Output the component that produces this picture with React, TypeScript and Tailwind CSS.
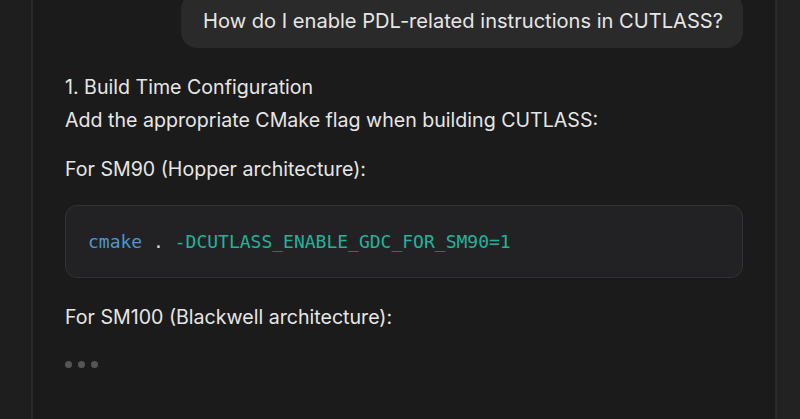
export default function App() {
  return (
    <div className="flex h-[419px] w-[800px] overflow-hidden bg-[#1b1b1b] font-['Inter',sans-serif] text-[#e6e6e6]">
      {/* left rail */}
      <div className="w-[33px] shrink-0 border-r-2 border-[#2a2a2a] bg-[#1e1e1e]" />

      {/* chat */}
      <div className="flex w-[742px] shrink-0 flex-col px-8">
        <div className="-mt-[7px] flex justify-end">
          <div className="rounded-2xl bg-[#2a2a2a] pb-[13px] pl-[22px] pr-[20px] pt-[14px] text-[20.1px] leading-[28px]">
            How do I enable PDL-related instructions in CUTLASS?
          </div>
        </div>

        <div className="mt-[23px] text-[19.6px] leading-[33px]">
          <p>1. Build Time Configuration</p>
          <p>Add the appropriate CMake flag when building CUTLASS:</p>
          <p className="mt-4">For SM90 (Hopper architecture):</p>
        </div>

        <div className="mt-[19px] flex h-[73px] items-center rounded-xl border border-[#333336] bg-[#222225] px-[22px] font-['DejaVu_Sans_Mono',monospace] text-[18px]">
          <span className="text-[#4f95cf]">cmake</span>
          <span className="text-[#d8d8d8]">&nbsp;.&nbsp;</span>
          <span className="text-[#22b39b]">-DCUTLASS_ENABLE_GDC_FOR_SM90=1</span>
        </div>

        <p className="mt-[23px] text-[19.6px] leading-[33px]">For SM100 (Blackwell architecture):</p>

        <div className="mt-[27px] flex gap-[6px]">
          <span className="h-[7px] w-[7px] rounded-full bg-[#555555]" />
          <span className="h-[7px] w-[7px] rounded-full bg-[#555555]" />
          <span className="h-[7px] w-[7px] rounded-full bg-[#555555]" />
        </div>
      </div>

      {/* right panel */}
      <div className="flex-1 border-l-2 border-[#2a2a2a] bg-[#222222]" />
    </div>
  )
}
